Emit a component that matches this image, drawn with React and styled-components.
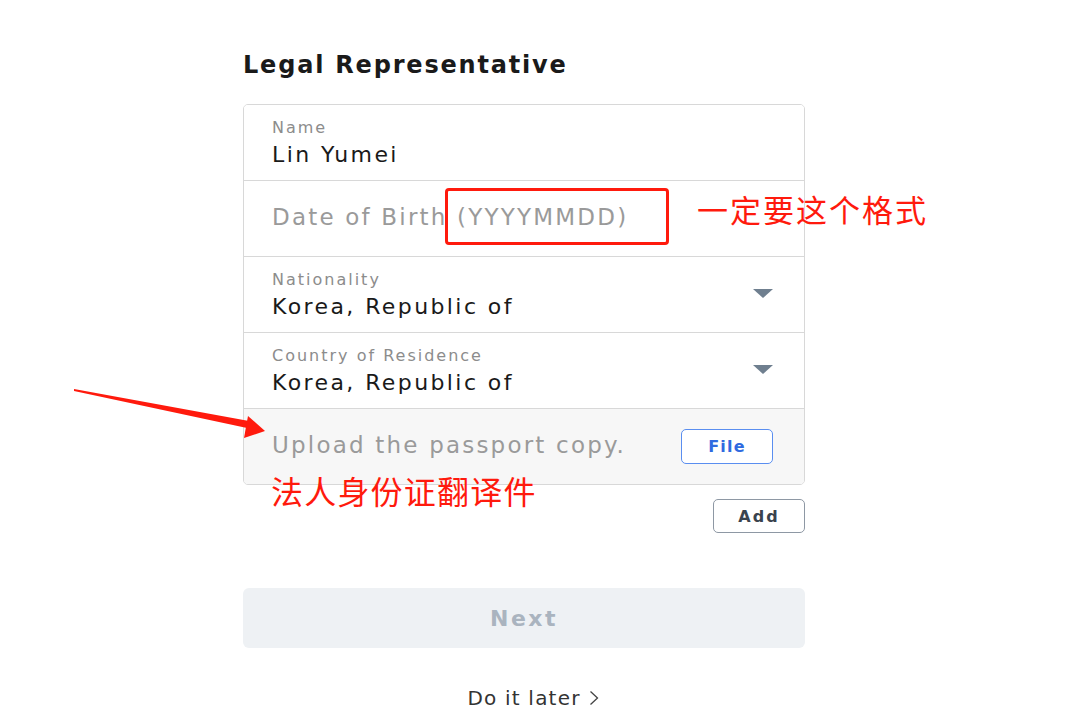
import React from 'react';
import styled, { createGlobalStyle } from 'styled-components';

const Global = createGlobalStyle`
    body {
        margin: 0;
        background: #fff;
        font-family: "DejaVu Sans", "Open Sans", sans-serif;
        color: #1f1f1f;
    }
`;

/* --------------------------------------------------------------- Page --- */

const Page = styled.div`
    position: relative;
    width: 1066px;
    height: 712px;
    overflow: hidden;
`;

const Column = styled.div`
    width: 562px;
    margin-left: 243px;
    padding-top: 47px;
    display: flex;
    flex-direction: column;
`;

const Title = styled.h2`
    margin: 0 0 21px;
    font-size: 24px;
    font-weight: 700;
    line-height: 36px;
    letter-spacing: 1.8px;
    color: #1a1a1a;
`;

/* --------------------------------------------------------------- Form --- */

const Card = styled.div`
    border: 1px solid #d8d8d8;
    border-radius: 5px;
    overflow: hidden;
`;

const Row = styled.div`
    height: 75px;
    display: flex;
    align-items: center;
    padding: 0 31px 0 28px;
    border-top: ${p => (p.first ? 'none' : '1px solid #d8d8d8')};
    background: ${p => (p.muted ? '#f7f7f7' : '#fff')};
`;

const Field = styled.div`
    flex: 1;
    display: flex;
    flex-direction: column;
    gap: 2px;
    margin-top: 3px;
`;

const Label = styled.span`
    font-size: 16px;
    line-height: 20px;
    letter-spacing: 2px;
    color: #8c8c8c;
`;

const Value = styled.span`
    font-size: 22px;
    line-height: 30px;
    letter-spacing: 2.4px;
    color: #1a1a1a;
`;

const Placeholder = styled.span`
    flex: 1;
    font-size: 23px;
    line-height: 30px;
    letter-spacing: 2.2px;
    color: #9a9a9a;
    margin-top: ${p => p.lift || 0}px;
`;

const Caret = styled.span`
    width: 0;
    height: 0;
    border-left: 10px solid transparent;
    border-right: 10px solid transparent;
    border-top: 9px solid #6f7f8f;
    margin-top: -2px;
`;

const OutlineButton = styled.button`
    height: ${p => p.h || 34}px;
    width: ${p => p.w || 92}px;
    border-radius: 5px;
    border: 1px solid ${p => p.tone || '#8e98a4'};
    background: #fff;
    color: ${p => p.ink || '#3a434e'};
    font-family: "DejaVu Sans", sans-serif;
    font-size: 16px;
    font-weight: 700;
    letter-spacing: ${p => p.track || 1}px;
    padding: 0;
`;

const Actions = styled.div`
    display: flex;
    justify-content: flex-end;
    margin-top: 14px;
`;

const NextButton = styled.button`
    margin-top: 55px;
    height: 60px;
    border: none;
    border-radius: 6px;
    background: #eef1f4;
    color: #aab4bf;
    font-family: "DejaVu Sans", sans-serif;
    font-size: 22px;
    font-weight: 700;
    letter-spacing: 2.5px;
`;

const Later = styled.div`
    margin: 38px 0 0 18px;
    display: flex;
    justify-content: center;
    align-items: center;
    gap: 8px;
    font-size: 20px;
    letter-spacing: 1.2px;
    color: #333;
`;

/* -------------------------------------------------------- Annotations --- */

const Note = styled.span`
    position: absolute;
    left: ${p => p.x}px;
    top: ${p => p.y}px;
    font-family: "Noto Sans CJK SC", sans-serif;
    font-size: ${p => p.size || 30}px;
    letter-spacing: ${p => p.track || 0}px;
    line-height: 1;
    color: #ff1a0d;
    white-space: nowrap;
`;

const Frame = styled.div`
    position: absolute;
    left: 445px;
    top: 188px;
    width: 218px;
    height: 51px;
    border: 3px solid #ff1a0d;
    border-radius: 4px;
`;

const Overlay = styled.svg`
    position: absolute;
    left: 0;
    top: 0;
    pointer-events: none;
`;

export default function App() {
    return (
        <Page>
            <Global />
            <Column>
                <Title>Legal Representative</Title>
                <Card>
                    <Row first>
                        <Field>
                            <Label>Name</Label>
                            <Value>Lin Yumei</Value>
                        </Field>
                    </Row>
                    <Row>
                        <Placeholder lift={-4}>Date of Birth (YYYYMMDD)</Placeholder>
                    </Row>
                    <Row>
                        <Field>
                            <Label>Nationality</Label>
                            <Value>Korea, Republic of</Value>
                        </Field>
                        <Caret />
                    </Row>
                    <Row>
                        <Field>
                            <Label>Country of Residence</Label>
                            <Value>Korea, Republic of</Value>
                        </Field>
                        <Caret />
                    </Row>
                    <Row muted>
                        <Placeholder lift={-3}>Upload the passport copy.</Placeholder>
                        <OutlineButton w={92} h={35} tone="#5a8ef0" ink="#2f6ae0" track={1.2}>File</OutlineButton>
                    </Row>
                </Card>
                <Actions>
                    <OutlineButton track={2}>Add</OutlineButton>
                </Actions>
                <NextButton>Next</NextButton>
                <Later>
                    Do it later
                    <svg width="10" height="16" viewBox="0 0 10 16">
                        <path d="M1.5 1.5l7 6.5-7 6.5" fill="none" stroke="#444" strokeWidth="1.3" />
                    </svg>
                </Later>
            </Column>

            <Frame />
            <Note x={697} y={193} size={31} track={2}>一定要这个格式</Note>
            <Note x={271} y={474} size={32} track={1.2}>法人身份证翻译件</Note>
            <Overlay width="1066" height="712">
                <polygon points="74,389 74,391 247,428 249,421" fill="#ff1a0d" />
                <polygon points="265,431 248,416 244,438" fill="#ff1a0d" />
            </Overlay>
        </Page>
    );
}
